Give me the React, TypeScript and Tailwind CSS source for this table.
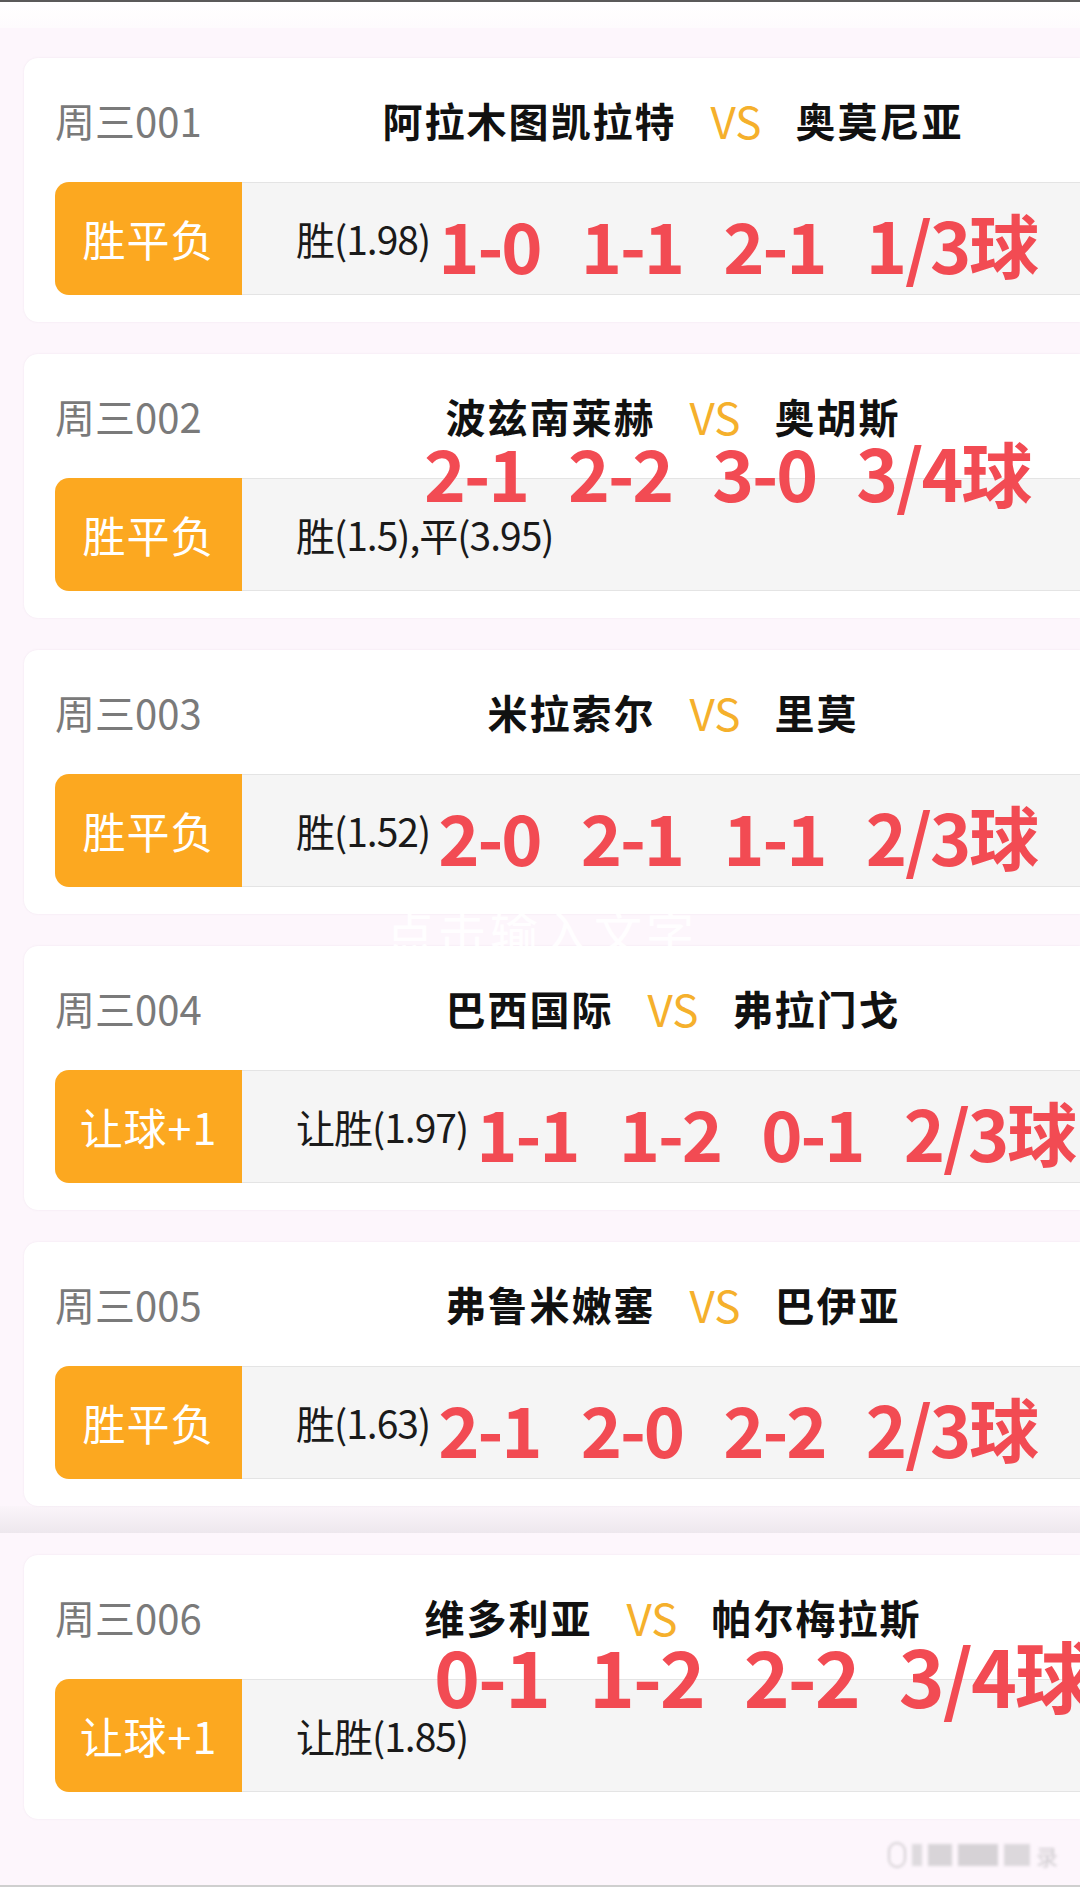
import React from 'react'

type Match = {
  no: string
  home: string
  away: string
  tag: string
  odds: string
  scores: string[]
  // scores drawn over the card instead of inline after the odds
  overlay?: { left: number; top: number; size: string }
}

const matches: Match[] = [
  { no: '周三001', home: '阿拉木图凯拉特', away: '奥莫尼亚', tag: '胜平负', odds: '胜(1.98)', scores: ['1-0', '1-1', '2-1', '1/3球'] },
  {
    no: '周三002',
    home: '波兹南莱赫',
    away: '奥胡斯',
    tag: '胜平负',
    odds: '胜(1.5),平(3.95)',
    scores: ['2-1', '2-2', '3-0', '3/4球'],
    overlay: { left: 400, top: 82, size: 'text-[71px]' },
  },
  { no: '周三003', home: '米拉索尔', away: '里莫', tag: '胜平负', odds: '胜(1.52)', scores: ['2-0', '2-1', '1-1', '2/3球'] },
  { no: '周三004', home: '巴西国际', away: '弗拉门戈', tag: '让球+1', odds: '让胜(1.97)', scores: ['1-1', '1-2', '0-1', '2/3球'] },
  { no: '周三005', home: '弗鲁米嫩塞', away: '巴伊亚', tag: '胜平负', odds: '胜(1.63)', scores: ['2-1', '2-0', '2-2', '2/3球'] },
  {
    no: '周三006',
    home: '维多利亚',
    away: '帕尔梅拉斯',
    tag: '让球+1',
    odds: '让胜(1.85)',
    scores: ['0-1', '1-2', '2-2', '3/4球'],
    overlay: { left: 410, top: 80, size: 'text-[78px]' },
  },
]

function Scores({ scores, className }: { scores: string[]; className: string }) {
  return (
    <div className={`flex shrink-0 items-center gap-[40px] font-bold leading-none text-[#f24b53] tracking-[-2px] whitespace-nowrap ${className}`}>
      {scores.map((s, i) => (
        <span key={i}>{s}</span>
      ))}
    </div>
  )
}

function MatchCard({ m }: { m: Match }) {
  return (
    <div className="relative ml-[24px] h-[264px] rounded-l-[14px] bg-white shadow-[0_0_2px_rgba(200,180,200,0.25)]">
      {/* header */}
      <div className="flex h-[124px] items-center pl-[31px]">
        <span className="w-[211px] text-[40px] text-[#7a7a7a] leading-none">{m.no}</span>
        <div className="flex flex-1 items-center justify-center gap-[34px] leading-none whitespace-nowrap">
          <span className="text-[40px] font-bold text-[#111] tracking-[2px]">{m.home}</span>
          <span className="text-[44px] text-[#f5b02c]">VS</span>
          <span className="text-[40px] font-bold text-[#111] tracking-[2px]">{m.away}</span>
        </div>
      </div>

      {/* play row */}
      <div className="ml-[31px] flex h-[113px]">
        <div className="flex w-[187px] shrink-0 items-center justify-center rounded-l-[14px] bg-[#fca820] text-[43px] text-white leading-none tracking-[1px] whitespace-nowrap">
          {m.tag}
        </div>
        <div className="flex min-w-0 flex-1 items-center border-y border-[#e4e4e4] bg-[#f5f5f5] pl-[54px]">
          <span className="shrink-0 whitespace-nowrap text-[39px] text-[#1a1a1a] leading-none tracking-[-1px]">{m.odds}</span>
          {!m.overlay && <Scores scores={m.scores} className="ml-[8px] mt-[10px] text-[70px]" />}
        </div>
      </div>

      {m.overlay && (
        <div className="absolute" style={{ left: m.overlay.left, top: m.overlay.top }}>
          <Scores scores={m.scores} className={m.overlay.size} />
        </div>
      )}
    </div>
  )
}

export default function App() {
  return (
    <div className="relative h-[1887px] w-[1080px] overflow-hidden bg-[#fdf6fc] font-['Noto_Sans_CJK_SC','Noto_Sans',sans-serif]">
      <div className="h-[2px] bg-[#5a5a5a]" />
      <div className="h-[26px] bg-gradient-to-b from-white to-[#fefbfd]" />
      <div className="h-[30px]" />

      <div className="flex flex-col gap-[32px]">
        {matches.slice(0, 5).map((m) => (
          <MatchCard key={m.no} m={m} />
        ))}
      </div>

      {/* stitched screenshot seam */}
      <div className="h-[27px] bg-gradient-to-b from-[#fbf5fa] to-[#ede7ed]" />
      <div className="h-[22px]" />

      <MatchCard m={matches[5]} />

      {/* faint overlay text left from editing */}
      <span className="absolute left-[386px] top-[906px] text-[48px] leading-none text-white/90 tracking-[4px]">
        点击输入文字
      </span>

      {/* blurred watermark */}
      <div className="absolute left-[888px] top-[1842px] flex items-center gap-[6px] blur-[1.5px]">
        <span className="h-[26px] w-[18px] rounded-full border-2 border-[#d4d0d4]" />
        <span className="h-[22px] w-[10px] bg-[#dedade]" />
        <span className="h-[22px] w-[24px] bg-[#d8d4d8]" />
        <span className="h-[22px] w-[40px] bg-[#d6d2d6]" />
        <span className="h-[22px] w-[26px] bg-[#dcd8dc]" />
        <span className="text-[22px] leading-none text-[#cfcbcf]">录</span>
      </div>

      <div className="absolute bottom-0 left-0 right-0 h-[2px] bg-[#cfcfcf]" />
    </div>
  )
}
